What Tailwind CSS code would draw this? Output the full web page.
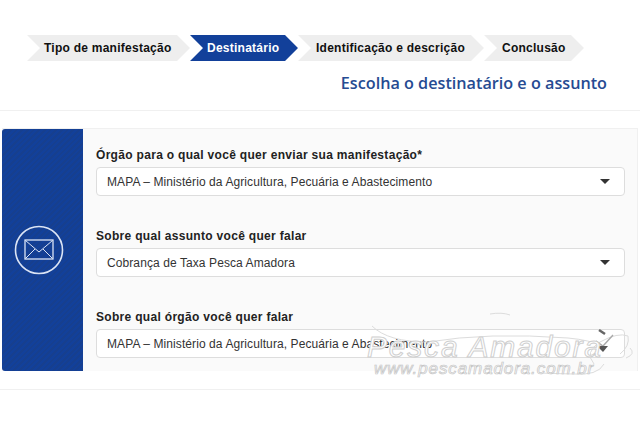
<!DOCTYPE html>
<html lang="pt-BR">
<head>
<meta charset="UTF-8">
<title>Escolha o destinatário</title>
<script src="https://cdn.jsdelivr.net/npm/@tailwindcss/browser@4"></script>
</head>
<body class="bg-white w-[640px] h-[426px] overflow-hidden relative font-['Liberation_Sans',sans-serif]">
  <div class="flex pl-[27px] pt-[35px] h-[61px] text-[12px] font-bold tracking-[0.25px]">
    <div class="w-[163px] h-[26px] bg-[#eeeeee] text-[#111] pl-[17px] flex items-center [clip-path:polygon(0_0,150px_0,100%_50%,150px_100%,0_100%,13px_50%)]">Tipo de manifestação</div>
    <div class="w-[108px] h-[26px] bg-[#12409a] text-white pl-[17px] flex items-center [clip-path:polygon(0_0,95px_0,100%_50%,95px_100%,0_100%,13px_50%)]">Destinatário</div>
    <div class="w-[186px] h-[26px] bg-[#eeeeee] text-[#111] pl-[18px] flex items-center [clip-path:polygon(0_0,173px_0,100%_50%,173px_100%,0_100%,13px_50%)]">Identificação e descrição</div>
    <div class="w-[100px] h-[26px] bg-[#eeeeee] text-[#111] pl-[18px] flex items-center [clip-path:polygon(0_0,87px_0,100%_50%,87px_100%,0_100%,13px_50%)]">Conclusão</div>
  </div>
  <h1 class="h-[49px] pr-[33px] pt-[11px] text-right text-[16.2px] leading-[22px] font-semibold text-[#264b92] font-['Open_Sans',sans-serif]">Escolha o destinatário e o assunto</h1>
  <div class="h-[18px] border-t border-[#f0f0f0]"></div>
  <div class="mx-[2px] h-[243px] flex bg-[#fafafa] border-t border-r border-[#f0f0f0]">
    <div class="w-[81px] bg-[#12409a] rounded-l-[3px] flex items-center justify-center bg-[repeating-linear-gradient(135deg,#12409a_0,#12409a_2px,#163f8f_2px,#163f8f_4px)]">
      <svg width="50" height="50" viewBox="0 0 50 50" fill="none" stroke="#dbe4f5" class="mr-[7px]">
        <circle cx="25" cy="25" r="23.5" stroke-width="1.6"/>
        <rect x="11" y="15" width="28" height="19" stroke-width="1.3"/>
        <path d="M11.5 15.5 L25 27 L38.5 15.5 M11.5 33.5 L21 24 M38.5 33.5 L29 24" stroke-width="1"/>
      </svg>
    </div>
    <div class="flex-1 pl-[13px] pr-[12px] pt-[17px] text-[12px] tracking-[0.09px] text-[#333]">
      <label class="block h-[21px] leading-[18px] font-bold tracking-[0.31px] text-[#222]">Órgão para o qual você quer enviar sua manifestação*</label>
      <div class="h-[29px] bg-white border border-[#ddd] rounded-[4px] flex items-center justify-between pl-[10px] pr-[14px]">
        <span>MAPA – Ministério da Agricultura, Pecuária e Abastecimento</span>
        <span class="w-0 h-0 border-x-[5px] border-x-transparent border-t-[5px] border-t-[#333]"></span>
      </div>
      <label class="block mt-[31px] h-[21px] leading-[18px] font-bold tracking-[0.31px] text-[#222]">Sobre qual assunto você quer falar</label>
      <div class="h-[29px] bg-white border border-[#ddd] rounded-[4px] flex items-center justify-between pl-[10px] pr-[14px]">
        <span>Cobrança de Taxa Pesca Amadora</span>
        <span class="w-0 h-0 border-x-[5px] border-x-transparent border-t-[5px] border-t-[#333]"></span>
      </div>
      <label class="block mt-[31px] h-[21px] leading-[18px] font-bold tracking-[0.31px] text-[#222]">Sobre qual órgão você quer falar</label>
      <div class="h-[29px] bg-white border border-[#ddd] rounded-[4px] flex items-center justify-between pl-[10px] pr-[14px]">
        <span>MAPA – Ministério da Agricultura, Pecuária e Abastecimento</span>
      </div>
    </div>
  </div>
  <div class="mt-[18px] border-t border-[#f0f0f0]"></div>

  <!-- marca d'agua -->
  <div class="absolute left-[368px] top-[312px] w-[272px] h-[66px] text-white italic">
    <svg class="absolute left-0 top-0" width="272" height="66" viewBox="0 0 272 66" fill="none" stroke="#dcdcdc">
      <path d="M4 14 Q20 30 60 30 Q120 20 200 26 Q222 28 234 34 M122 2 Q134 0 142 3"/>
      <path d="M226 52 Q216 40 232 30 Q250 20 260 24 Q262 34 252 42 M262 36 Q268 42 258 46 M236 52 Q230 64 204 62 L170 61"/>
    </svg>
    <svg class="absolute left-[224px] top-[12px]" width="26" height="30" viewBox="0 0 26 30" fill="none">
      <path d="M7 6 L13 10" stroke="#666" stroke-width="2.4"/>
      <path d="M4 17 L11 22 L21 11" stroke="#aaa" stroke-width="1.4"/>
      <path d="M5 22 L16 22 L11 28 Z" fill="#555"/>
    </svg>
    <span class="absolute left-[-1px] top-[19px] text-[30px] leading-[32px] tracking-[1.8px] [-webkit-text-stroke:1px_#cfcfcf]">Pesca Amadora</span>
    <span class="absolute left-[6px] top-[48px] text-[17px] leading-[18px] tracking-[0.9px] [-webkit-text-stroke:0.7px_#c4c4c4]">www.pescamadora.com.br</span>
  </div>
</body>
</html>
